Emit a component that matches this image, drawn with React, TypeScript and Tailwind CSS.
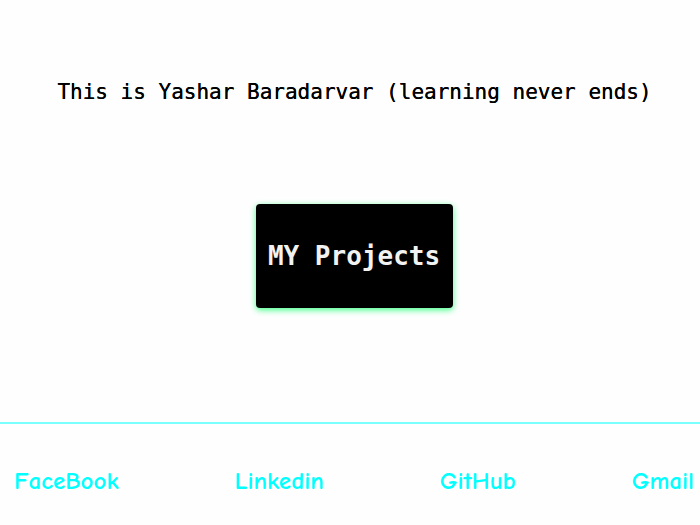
const links = ['FaceBook', 'Linkedin', 'GitHub', 'Gmail']

export default function App() {
  return (
    <div className="flex h-[525px] w-[700px] flex-col bg-[#fefefe]">
      <header className="flex h-[185px] items-start justify-center pl-[9px] pt-[79px]">
        <h1 className="font-['DejaVu_Sans_Mono',monospace] text-[21px] leading-[26px] text-black [text-shadow:0_0_0.4px_#000]">
          This is Yashar Baradarvar (learning never ends)
        </h1>
      </header>

      <main className="flex h-[237px] items-start justify-center pl-[8px] pt-[19px]">
        <button className="flex h-[104px] w-[197px] items-center justify-center rounded-[4px] bg-black font-['DejaVu_Sans_Mono',monospace] text-[26px] font-bold text-[#f2f2f2] shadow-[0_2px_6px_#3dff85]">
          MY Projects
        </button>
      </main>

      <div className="h-[2px] w-full bg-[#7affff]" />

      <footer className="flex flex-1 items-start justify-between pl-[14px] pr-[6px] pt-[44px]">
        {links.map((l) => (
          <a
            key={l}
            href="#"
            className="font-['Comic_Neue','Comic_Sans_MS',cursive] text-[25px] font-bold leading-none text-[#00ffff]"
          >
            {l}
          </a>
        ))}
      </footer>
    </div>
  )
}
